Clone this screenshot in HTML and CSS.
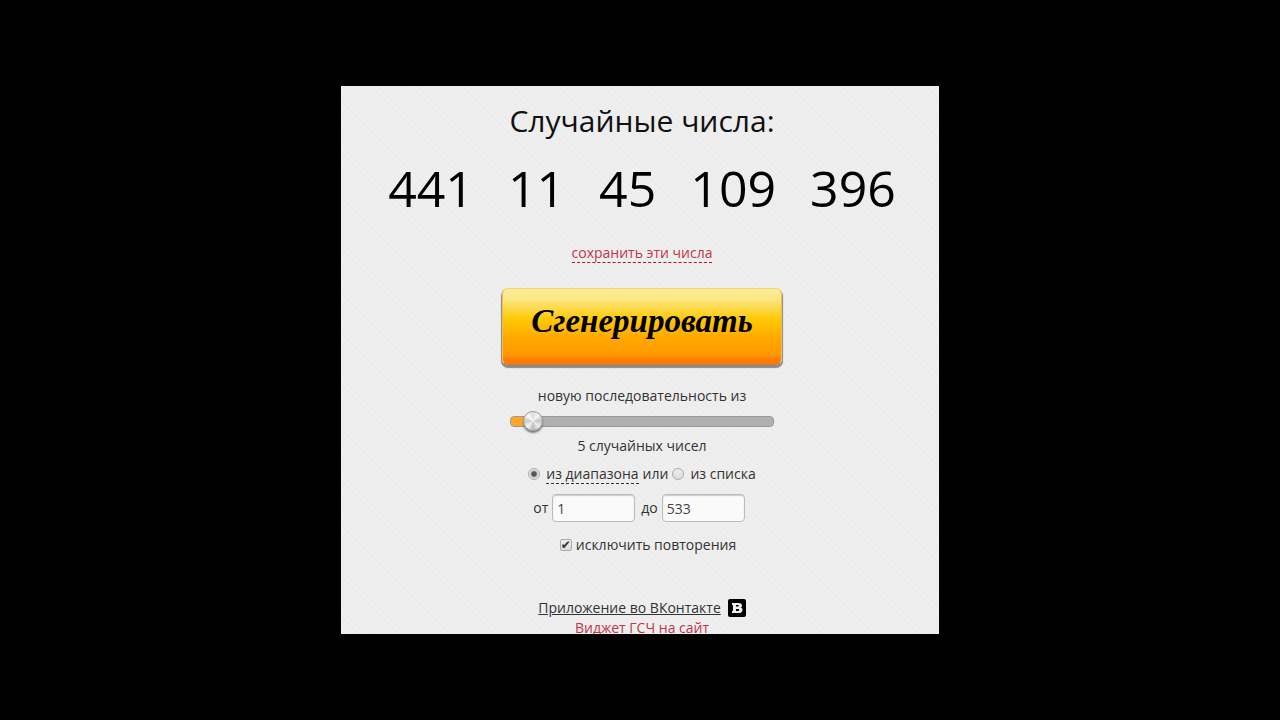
FILE: index.html
```html
<!DOCTYPE html>
<html lang="ru">
  <head>
    <meta charset="UTF-8" />
    <meta name="viewport" content="width=device-width, initial-scale=1.0" />
    <title>Генератор случайных чисел</title>
    <link rel="stylesheet" href="styles.css">
  </head>
  <body>
    <main class="panel">
      <h1 class="title">Случайные числа:</h1>
      <div class="numbers">
        <span>441</span>
        <span>11</span>
        <span>45</span>
        <span>109</span>
        <span>396</span>
      </div>
      <p class="row save"><a href="#" class="save-link">сохранить эти числа</a></p>
      <button type="button" class="generate">Сгенерировать</button>
      <label for="count" class="row count-label">новую последовательность из</label>
      <input type="range" id="count" class="slider" min="0" max="100" value="5">
      <p class="row">5 случайных чисел</p>
      <div class="row source">
        <input type="radio" name="source" id="range" checked>
        <label for="range" class="dashed">из диапазона</label>
        <span class="or">или</span>
        <input type="radio" name="source" id="list">
        <label for="list">из списка</label>
      </div>
      <div class="limits">
        <label for="from">от</label>
        <input type="text" id="from" value="1">
        <label for="to">до</label>
        <input type="text" id="to" value="533">
      </div>
      <div class="row unique">
        <input type="checkbox" id="unique" checked>
        <label for="unique">исключить повторения</label>
      </div>
      <div class="row vk">
        <a href="#">Приложение во ВКонтакте</a>
        <svg width="18" height="18" viewBox="0 0 18 18" aria-hidden="true">
          <rect width="18" height="18" rx="2" fill="#000"/>
          <path fill="#f0f0f0" fill-rule="evenodd" d="M4 4h6.500c2.300 0 3.500 .9 3.500 2.400 0 1-.5 1.700-1.500 2.100 1.300 .3 2 1.200 2 2.400 0 2-1.500 3.100-4 3.100H4v-2h1v-6H4zM8 6v1.600h1.600c.9 0 1.200-.3 1.200-.8s-.3-.8-1.200-.8zM8 10v2h1.900c.9 0 1.300-.4 1.300-1s-.4-1-1.300-1z"/>
        </svg>
      </div>
      <a href="#" class="widget">Виджет ГСЧ на сайт</a>
    </main>
  </body>
</html>
```
FILE: styles.css
```css
* {
  box-sizing: border-box;
}
body {
  margin: 0;
  padding: 86px 16px;
  display: flex;
  justify-content: center;
  background: #000;
  color: #333;
  font-family: "Open Sans", sans-serif;
  font-size: 14px;
  line-height: 20px;
}
.panel {
  flex: 0 1 598px;
  display: flex;
  flex-direction: column;
  align-items: center;
  padding: 15px 0 0 4px;
  overflow: hidden;
  background: repeating-linear-gradient(45deg, #ececec 0, #ececec 2px, #efefef 2px, #efefef 4px);
}
.title {
  margin: 0;
  color: #111;
  font-size: 30px;
  font-weight: 400;
  line-height: 40px;
}
.numbers {
  display: flex;
  gap: 34px;
  margin-top: 17px;
  color: #000;
  font-size: 50px;
  font-weight: 400;
  line-height: 60px;
}
.row {
  margin: 0;
}
.save {
  margin-top: 25px;
}
.save-link {
  color: #c1354a;
  text-decoration: none;
  border-bottom: 1px dashed #b5122b;
}
.generate {
  width: 280px;
  height: 77px;
  margin-top: 25px;
  padding: 0 0 10px;
  border: 1px solid #f3b94a;
  border-top-color: #f3d66a;
  border-bottom-color: #d9782a;
  border-radius: 6px;
  background: linear-gradient(#fbee9c 0, #fbe783 14%, #ffc905 40%, #ffa800 66%, #ff9800 88%, #ff7c00 94%, #ff7c00 100%);
  box-shadow: 0 2px 1px 1px #8a8a8a;
  color: #000;
  font-family: "Liberation Serif", serif;
  font-size: 33px;
  font-style: italic;
  font-weight: 700;
}
.count-label {
  margin-top: 21px;
}
.slider {
  appearance: none;
  width: 264px;
  height: 20px;
  margin: 5px 0;
  background: none;
}
.slider::-webkit-slider-runnable-track {
  height: 11px;
  border: 1px solid #999;
  border-radius: 4px;
  background: linear-gradient(90deg, #ffa52a 8%, #b0b0b0 8%);
}
.slider::-webkit-slider-thumb {
  appearance: none;
  width: 20px;
  height: 20px;
  margin-top: -6px;
  border: 1px solid #999;
  border-radius: 50%;
  background: conic-gradient(#ddd, #f5f5f5 12%, #c4c4c4 25%, #eee 37%, #bbb 50%, #f5f5f5 62%, #c8c8c8 75%, #fafafa 88%, #ddd);
  box-shadow: 0 2px 2px #777;
}
.source {
  display: flex;
  align-items: center;
  margin-top: 8px;
}
.source input {
  appearance: none;
  width: 12px;
  height: 12px;
  margin: 0 6px 0 0;
  border: 1px solid #aaa;
  border-radius: 50%;
  background: linear-gradient(#eee, #ddd);
}
.source input:checked {
  background: radial-gradient(circle, #555 0, #555 2px, #e6e6e6 4px);
}
.dashed {
  line-height: 19px;
  border-bottom: 1px dashed #333;
}
.or {
  margin: 0 4px;
}
.limits {
  display: flex;
  align-items: center;
  margin-top: 10px;
}
.limits input {
  width: 83px;
  height: 28px;
  margin: 0 6px 0 4px;
  padding: 0 4px;
  border: 1px solid #bbb;
  border-radius: 4px;
  background: #fafafa;
  box-shadow: inset 0 1px 1px #ccc;
  color: #444;
  font: inherit;
}
.unique {
  display: flex;
  align-items: center;
  gap: 4px;
  margin-top: 13px;
  padding-left: 12px;
}
.unique input {
  appearance: none;
  display: grid;
  place-items: center;
  width: 12px;
  height: 12px;
  margin: 0;
  border: 1px solid #aaa;
  border-radius: 2px;
  background: linear-gradient(#eee, #ddd);
}
.unique input:checked::before {
  content: "✔";
  color: #333;
  font: 12px/10px "DejaVu Sans", sans-serif;
}
.vk {
  display: flex;
  align-items: center;
  gap: 7px;
  margin-top: 43px;
}
.vk a {
  color: #333;
}
.widget {
  height: 16px;
  color: #c1354a;
  text-decoration: none;
}
```
